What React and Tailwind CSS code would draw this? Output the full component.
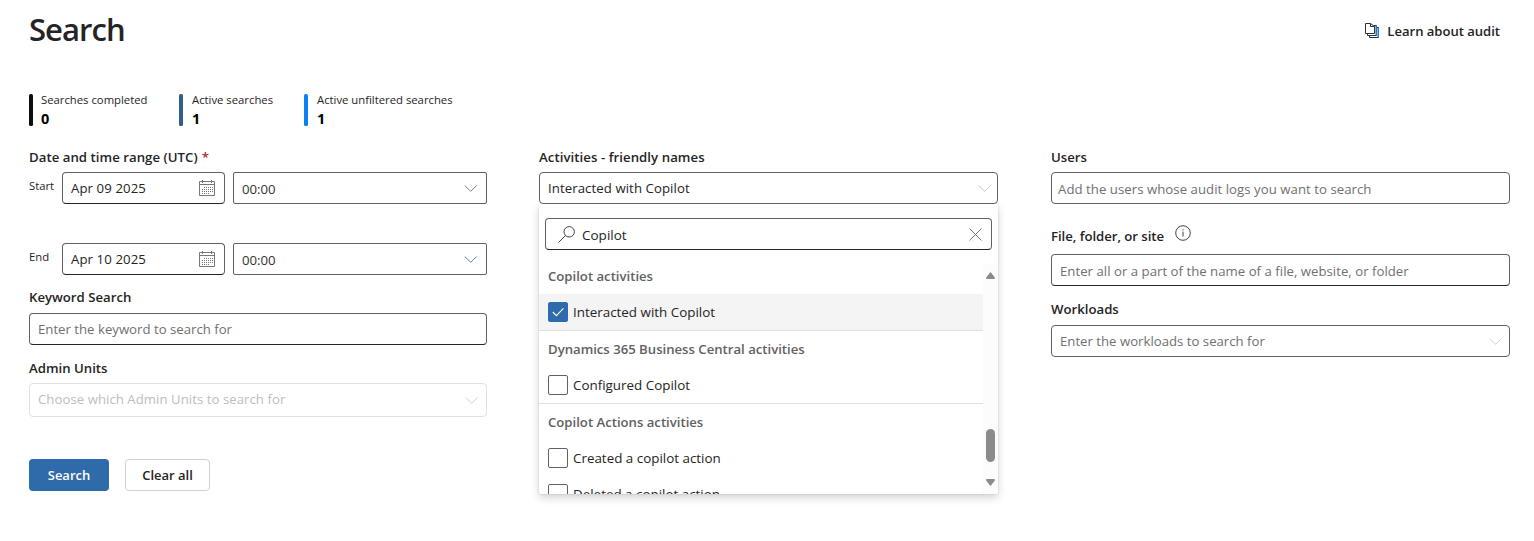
import React from "react";

function Chevron({ className = "text-[#797775]" }) {
  return (
    <svg className={`h-[7px] w-[13px] shrink-0 ${className}`} viewBox="0 0 13 7" fill="none" stroke="currentColor">
      <path d="M0.7 0.5 6.7 6.3 12.7 0.5" />
    </svg>
  );
}

function Calendar() {
  return (
    <svg className="h-4 w-4 shrink-0 text-[#797775]" viewBox="0 0 16 16" fill="none" stroke="currentColor">
      <path d="M0.5 1.5H15.5V15.5H0.5ZM0.5 4.5H15.5M3.5 0V3M12.5 0V3" />
      <path d="M5 7.5H14M3 9.5H14M3 11.5H14M3 13.5H11" strokeDasharray="1 1" />
    </svg>
  );
}

function Label({ children, className = "" }) {
  return (
    <div className={`flex h-5 items-center whitespace-nowrap pt-0.5 text-[13.2px] font-semibold text-[#242424] ${className}`}>
      {children}
    </div>
  );
}

function Field({ children, className = "", icon = null, textClass = "mt-0.5" }) {
  return (
    <div
      className={`flex items-center justify-between whitespace-nowrap rounded border bg-white text-[13.2px] ${className}`}
    >
      <span className={textClass}>{children}</span>
      {icon}
    </div>
  );
}

const plain = "h-8 border-[#616161] pl-2";
const underlined = "h-8 border-[#616161] border-b-[#242424] pl-2";

function DateRow({ label, date, chevron, className = "" }) {
  return (
    <div className={`flex ${className}`}>
      <div className="h-7 w-[33px] text-[11.3px] leading-7 text-[#242424]">{label}</div>
      <Field
        className={`w-[163px] pr-[9px] tracking-[0.1px] text-[#242424] ${underlined}`}
        textClass="mt-px"
        icon={<Calendar />}
      >
        {date}
      </Field>
      <div className="ml-2 flex h-8 w-[254px] items-center justify-between rounded-xs border border-[#616161] pl-2 pr-[9px] text-[13.2px] text-[#323130]">
        <span className="mt-[3px]">00:00</span>
        <Chevron className={chevron} />
      </div>
    </div>
  );
}

function Stat({ bar, label, value, className, gap = "ml-[9px]" }) {
  return (
    <div className={`flex h-8 whitespace-nowrap ${className}`}>
      <div className={`h-8 w-1 rounded-[1.5px] ${bar}`} />
      <div className={gap}>
        <div className="h-3 text-[11.3px] leading-3 text-[#242424]">{label}</div>
        <div className="mt-1 h-4 text-[14.5px] font-bold leading-[18px] text-black">{value}</div>
      </div>
    </div>
  );
}

function Heading({ children, className = "h-9 pt-0.5" }) {
  return (
    <div className={`flex shrink-0 items-center pl-[9px] text-[13.15px] font-semibold text-[#616161] ${className}`}>
      {children}
    </div>
  );
}

function Option({ children, checked = false, className = "" }) {
  return (
    <div className={`flex shrink-0 items-center pl-[9px] text-[13.4px] text-[#242424] ${className}`}>
      <span
        className={`mr-[5px] flex h-5 w-5 items-center justify-center rounded-xs border ${
          checked ? "border-[#2f6bab] bg-[#2f6bab]" : "border-[#616161] bg-white"
        }`}
      >
        {checked && (
          <svg className="h-3 w-3" viewBox="0 0 12 12" fill="none" stroke="white" strokeWidth="1.1">
            <path d="M0.8 6 4.4 9.6 11.4 2.4" />
          </svg>
        )}
      </span>
      <span>{children}</span>
    </div>
  );
}

export default function App() {
  return (
    <main className="h-[541px] w-[1534px] overflow-hidden bg-white pl-[29px] font-['Open_Sans','Noto_Sans',sans-serif]">
      <header className="flex h-[60px] items-center justify-between pr-[34px]">
        <h1 className="mb-0.5 text-[31px] font-semibold tracking-[-0.95px] text-[#242424]">Search</h1>
        <a className="mt-1 flex items-center text-[13.1px] font-semibold tracking-[-0.03px] text-[#242424]">
          <svg className="mb-px mr-2 h-4 w-[14px]" viewBox="0 0 14 16" fill="none">
            <path d="M12.5 5V14M10.5 3V12" stroke="#7db8ea" />
            <path d="M4.5 12.5V14.5H13.5V4.5H12M2.5 10.5V12.5H11.5V2.5H9" stroke="#323130" />
            <path d="M13.5 5V14M11.5 3V12" stroke="#2b78c0" />
            <path d="M0.5 0.5H5.5L9.5 3.5V10.5H0.5ZM5.5 0.5V3.5H9.5" stroke="#323130" fill="white" />
          </svg>
          Learn about audit
        </a>
      </header>

      <section className="mt-[34px] flex">
        <Stat className="w-[150px]" bar="bg-[#0b0f0f]" label="Searches completed" value="0" gap="ml-2" />
        <Stat className="w-[125px]" bar="bg-[#305f8b]" label="Active searches" value="1" />
        <Stat className="w-[150px]" bar="bg-[#0f80f0]" label="Active unfiltered searches" value="1" />
      </section>

      <section className="mt-[21px] flex">
        <div className="w-[458px]">
          <Label className="tracking-[0.04px]">
            Date and time range (UTC) <span className="ml-1 text-[#a4262c]">*</span>
          </Label>
          <DateRow className="mt-[5px]" label="Start" date="Apr 09 2025" chevron="text-[#94785f]" />
          <DateRow className="mt-[39px]" label="End" date="Apr 10 2025" chevron="text-[#5f84a0]" />
          <Label className="mt-3">Keyword Search</Label>
          <Field className={`mt-1.5 text-[#707070] ${underlined}`}>Enter the keyword to search for</Field>
          <Label className="mt-[13px]">Admin Units</Label>
          <Field
            className="mt-[5px] h-[34px] border-[#e0e0e0] pl-2 pr-2 tracking-[0.04px] text-[#bdbdbd]"
            textClass=""
            icon={<Chevron className="text-[#d2d0ce]" />}
          >
            Choose which Admin Units to search for
          </Field>
          <div className="mt-[42px] flex gap-4">
            <button className="h-8 w-20 rounded bg-[#2f6bab] pt-0.5 text-[13px] font-semibold text-white">Search</button>
            <button className="h-8 w-[85px] rounded border border-[#d1d1d1] bg-white pt-0.5 text-[13px] font-semibold text-[#242424]">
              Clear all
            </button>
          </div>
        </div>

        <div className="ml-[52px] w-[459px]">
          <Label className="tracking-[0.06px]">Activities - friendly names</Label>
          <div className="relative mt-[5px]">
            <Field
              className={`relative z-10 pr-[6px] tracking-[0.08px] text-[#242424] ${plain}`}
              icon={<Chevron className="text-[#c8c6c4]" />}
            >
              Interacted with Copilot
            </Field>
            <div className="absolute left-0 top-8 flex h-[290px] w-[459px] flex-col overflow-hidden rounded-b-xs bg-white pt-[14px] shadow-[0_4px_9px_rgba(0,0,0,0.17),0_0_2px_rgba(0,0,0,0.16)]">
              <Field
                className="mx-1.5 h-8 shrink-0 border-[#616161] border-b-[#242424] pl-3 pr-[9px] text-[#242424]"
                textClass="flex items-center"
                icon={
                  <svg className="h-[13px] w-[13px] text-[#797775]" viewBox="0 0 13 13" stroke="currentColor">
                    <path d="M0.5 0.5 12.5 12.5M12.5 0.5 0.5 12.5" />
                  </svg>
                }
              >
                <svg className="mr-[7px] h-[17px] w-[17px]" viewBox="0 0 17 17" fill="none" stroke="#424242">
                  <circle cx="11.2" cy="5.8" r="5.2" />
                  <path d="M0.5 16.5 7.5 9.5" />
                </svg>
                <span className="mt-0.5 text-[13.5px]">Copilot</span>
              </Field>
              <div className="mt-[14px] flex h-[230px]">
                <div className="flex w-[444px] flex-col overflow-hidden">
                  <Heading className="h-[30px] pb-1">Copilot activities</Heading>
                  <Option checked className="h-[37px] border-b border-[#e0e0e0] bg-[#f4f4f4]">
                    Interacted with Copilot
                  </Option>
                  <Heading>Dynamics 365 Business Central activities</Heading>
                  <Option className="h-[37px] border-b border-[#e0e0e0]">Configured Copilot</Option>
                  <Heading>Copilot Actions activities</Heading>
                  <Option className="h-9">Created a copilot action</Option>
                  <Option className="h-9">Deleted a copilot action</Option>
                </div>
                <div className="flex w-[15px] flex-col items-center bg-[#fcfcfc] pt-2">
                  <svg className="h-[7px] w-[9px]" viewBox="0 0 9 7" fill="#8b8b8b">
                    <path d="M4 0.4Q4.5 0 5 0.4L9 5.8Q9 7 8 7H1Q0 7 0 5.8Z" />
                  </svg>
                  <div className="mt-[150px] h-[33px] w-[9px] rounded-full bg-[#8b8b8b]" />
                  <svg className="mt-[17px] h-[7px] w-[9px]" viewBox="0 0 9 7" fill="#8b8b8b">
                    <path d="M4 6.6Q4.5 7 5 6.6L9 1.2Q9 0 8 0H1Q0 0 0 1.2Z" />
                  </svg>
                </div>
              </div>
            </div>
          </div>
        </div>

        <div className="ml-[53px] w-[459px]">
          <Label>Users</Label>
          <Field
            className="mt-[5px] h-8 border-[#616161] pl-1.5 tracking-[0.04px] text-[#707070]"
            textClass="mt-[3px]"
          >
            Add the users whose audit logs you want to search
          </Field>
          <Label className="mt-[22px]">
            <span className="w-[112px] tracking-[-0.05px]">File, folder, or site</span>
            <svg className="mb-[9px] ml-3 h-4 w-4" viewBox="0 0 16 16" fill="none" stroke="#424242">
              <circle cx="8" cy="8" r="7.3" />
              <path d="M8 6.6V11.6M8 4.2V5.4" />
            </svg>
          </Label>
          <Field
            className={`mt-2 tracking-[0.02px] text-[#707070] ${underlined}`}
            textClass="mt-[3px]"
          >
            Enter all or a part of the name of a file, website, or folder
          </Field>
          <Label className="mt-[13px]">Workloads</Label>
          <Field
            className={`mt-1.5 pr-[7px] text-[#707070] ${plain}`}
            icon={<Chevron className="text-[#d2d0ce]" />}
          >
            Enter the workloads to search for
          </Field>
        </div>
      </section>
    </main>
  );
}
